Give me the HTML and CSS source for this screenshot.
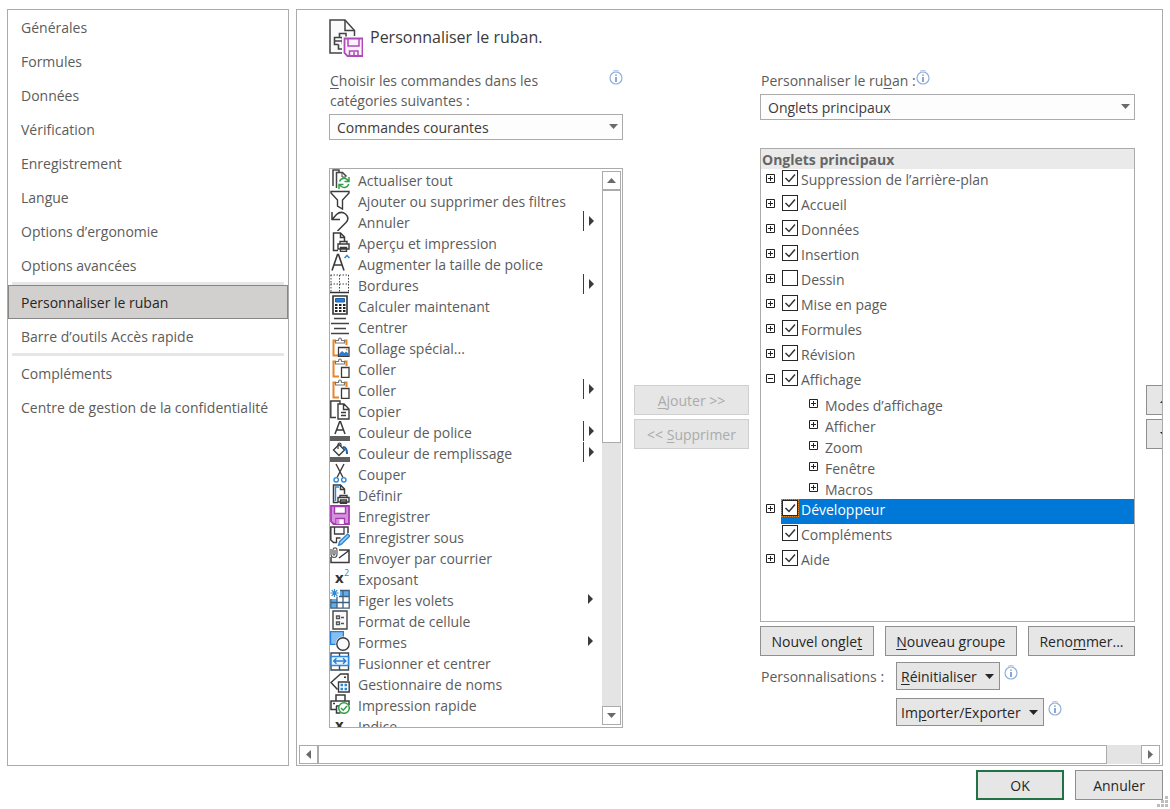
FILE: index.html
```html
<!DOCTYPE html>
<html lang="fr">
<head>
<meta charset="utf-8">
<meta name="viewport" content="width=device-width, initial-scale=1">
<title>Options</title>
<link rel="stylesheet" href="styles.css">
</head>
<body>
<svg class="defs" aria-hidden="true">
  <symbol id="info" viewBox="0 0 14 15"><circle cx="7" cy="8" r="6" fill="#fff" stroke="#8faedb" stroke-width="1.2"/><path d="M4 1.2Q7-.3 10 1.2" stroke="#a9c0e4" fill="none"/><path d="M7 7v5M7 4.500v1.200" stroke="#3f6cb0" stroke-width="1.200"/></symbol>
  <symbol id="down" viewBox="0 0 9 5"><path d="M0 0h9L4.500 5z"/></symbol>
  <symbol id="paste" viewBox="0 0 20 20"><path d="M6 3.500H3.500v15H9M14 3.500h2.500V8" fill="none" stroke="#e8842a" stroke-width="2"/><path d="M5.500 6V3.500h3Q8.500 1 10 1t1.500 2.500h3V6z" fill="#fff" stroke="#777" stroke-width="1.200"/><path d="M11.500 9.500h7.500v10h-7.500z" fill="#fff" stroke="#3b3b3b" stroke-width="1.300"/></symbol>
  <symbol id="plus" viewBox="0 0 9 9"><path d="M.5.5h8v8h-8zM2 4.500h5M4.500 2v5" fill="#fff" stroke="#222"/></symbol>
  <symbol id="minus" viewBox="0 0 9 9"><path d="M.5.5h8v8h-8zM2 4.500h5" fill="#fff" stroke="#222"/></symbol>
</svg>
<div class="dialog">
  <div class="workspace">
    <nav class="sidebar" aria-label="Catégories">
      <a href="#generales">Générales</a>
      <a href="#formules">Formules</a>
      <a href="#donnees">Données</a>
      <a href="#verification">Vérification</a>
      <a href="#enregistrement">Enregistrement</a>
      <a href="#langue">Langue</a>
      <a href="#ergonomie">Options d’ergonomie</a>
      <a href="#avancees">Options avancées</a>
      <hr>
      <a href="#ruban" class="current" aria-current="page">Personnaliser le ruban</a>
      <a href="#acces-rapide">Barre d’outils Accès rapide</a>
      <hr>
      <a href="#complements">Compléments</a>
      <a href="#confidentialite">Centre de gestion de la confidentialité</a>
    </nav>

    <main class="panel">
      <header class="heading">
        <svg width="34" height="38" viewBox="0 0 34 38" fill="none" stroke="#444" stroke-width="1.500"><path d="M13 34H1V1h15l9.500 10.500V17" fill="#fafafa"/><path d="M16 1v10.500h9.500"/><path d="M10.500 19v-4.500H17v4M9.500 18.500h-4v7h4M6 22h7M9.500 18.500h4v7M9.500 25.500V30H14" stroke-width="1.600"/><path d="M14.500 19h19v18.500H18l-3.500-3z" fill="#fff" stroke="#fff" stroke-width="3"/><path d="M15.500 19.500h18v17.500H18.500l-3-3z" fill="#fbf1fb" stroke="#ae4bb8" stroke-width="1.800"/><path d="M19 20v7h11v-7M20.500 37v-5h8.500v5M25 33v4" stroke="#ae4bb8"/></svg>
        <h1>Personnaliser le ruban.</h1>
      </header>

      <div class="columns">
        <section class="commands">
          <div class="field-label"><label for="source"><u>C</u>hoisir les commandes dans les catégories suivantes :</label><svg class="info"><use href="#info"/></svg></div>
          <div class="select"><select id="source"><option>Commandes courantes</option></select><svg><use href="#down"/></svg></div>
          <div class="listbox">
            <ul role="listbox" aria-label="Commandes courantes">
              <li role="option"><svg viewBox="0 0 20 20"><path d="M3 17V1h6v2M6.500 19V3.500h6l4 4" fill="none" stroke="#444" stroke-width="1.500"/><path d="M12 3.500V8h4" fill="none" stroke="#444"/><path d="M9.500 12.500q1.500-3.500 5-3.200 2.500.2 4 2.700M19 8v4.500h-4.500M18.800 15q-1.500 3.800-5 3.500-2.500-.2-4-2.700M9 20v-4.500h4.500" fill="none" stroke="#31a04b" stroke-width="1.500"/></svg>Actualiser tout</li>
              <li role="option"><svg viewBox="0 0 20 20"><path d="M1 1.500h18v1.500l-6.500 7V19l-5-3v-6L1 3z" fill="#fff" stroke="#3b3b3b" stroke-width="1.400"/></svg>Ajouter ou supprimer des filtres</li>
              <li role="option"><svg viewBox="0 0 20 20"><path d="M2 1v7.500h8M2.500 8l4-4.500Q11-.5 15.500 3q4.500 4 .5 8.500L7.500 20" fill="none" stroke="#3b3b3b" stroke-width="1.500"/></svg>Annuler<i class="more split"></i></li>
              <li role="option"><svg viewBox="0 0 20 20"><path d="M8 18.500H3.500V1h7l4 4v4M10.500 1v4.500h4" fill="#fff" stroke="#3b3b3b" stroke-width="1.500"/><path d="M10 12V9.500h7V12M8 12h11v5H8zM10.500 15.500h6v4h-6z" fill="#fff" stroke="#3b3b3b" stroke-width="1.400"/></svg>Aperçu et impression</li>
              <li role="option"><svg viewBox="0 0 20 20"><path d="M2 17.500L7.500 1.500h1L14 17.500M4 12h8" fill="none" stroke="#3b3b3b" stroke-width="1.600"/><path d="M14.500 5L17 2.500 19.500 5" fill="none" stroke="#2b88d8" stroke-width="1.500"/></svg>Augmenter la taille de police</li>
              <li role="option"><svg viewBox="0 0 20 20"><path d="M.5 1h18.500M.5 10h18.500M1 1v17M9.500 1v17M18.500 1v17" fill="none" stroke="#444" stroke-dasharray="1.500 1.500"/><path d="M0 18.500h19" stroke="#333" stroke-width="1.500"/></svg>Bordures<i class="more split"></i></li>
              <li role="option"><svg viewBox="0 0 20 20"><path d="M3 1h14v18H3z" fill="#fff" stroke="#333" stroke-width="1.600"/><path d="M5.500 3.500h9V7h-9z" fill="#2b7cd3" stroke="#1b5ea6"/><path d="M5 10h2.500M9 10h2.500M13 10h2.500M5 13h2.500M9 13h2.500M13 13h2.500M5 16h2.500M9 16h2.500M13 16h2.500" stroke="#222" stroke-width="2"/></svg>Calculer maintenant</li>
              <li role="option"><svg viewBox="0 0 20 20"><path d="M4 2.500h12M1 7.500h18M4 12.500h12M1 17.500h18" stroke="#444" stroke-width="1.300"/></svg>Centrer</li>
              <li role="option"><svg viewBox="0 0 20 20"><path d="M6 3.500H3.500v15H8M14 3.500h2.500V8" fill="none" stroke="#e8842a" stroke-width="2"/><path d="M5.500 6V3.500h3Q8.500 1 10 1t1.500 2.500h3V6z" fill="#fff" stroke="#777" stroke-width="1.200"/><path d="M8.500 10.500h10.500v9H8.500z" fill="#fff" stroke="#3b3b3b" stroke-width="1.300"/><path d="M9 17l3-3 2.500 2 1.500-1.500 2.500 2V19H9z" fill="#2b7cd3"/><path d="M16 12.500h1.500" stroke="#e8842a" stroke-width="1.500"/></svg>Collage spécial...</li>
              <li role="option"><svg><use href="#paste"/></svg>Coller</li>
              <li role="option"><svg><use href="#paste"/></svg>Coller<i class="more split"></i></li>
              <li role="option"><svg viewBox="0 0 20 20"><path d="M6 17.500H.8V1H10v3" fill="#fff" stroke="#3b3b3b" stroke-width="1.400"/><path d="M8 4h6l5 5v10H8zM13.500 4v5.500H19M11 12.500h5M11 15.500h5" fill="#fff" stroke="#3b3b3b" stroke-width="1.400"/></svg>Copier</li>
              <li role="option"><svg viewBox="0 0 20 20"><path d="M5 13L9.600.8h.9L15 13M6.500 9h7" fill="none" stroke="#3b3b3b" stroke-width="1.500"/><path d="M0 15h20v5H0z" fill="#606060"/></svg>Couleur de police<i class="more split"></i></li>
              <li role="option"><svg viewBox="0 0 20 20"><path d="M3.500 8L9 2.500l5.500 5.500L9 13.500z" fill="#fff" stroke="#3b3b3b" stroke-width="1.400"/><path d="M8 7V2.500Q8 1 9.500 1T11 2.500V4" fill="none" stroke="#3b3b3b" stroke-width="1.200"/><path d="M13 5q4 0 4 7" fill="none" stroke="#1b66b3" stroke-width="2"/><path d="M0 15h20v5H0z" fill="#606060"/></svg>Couleur de remplissage<i class="more split"></i></li>
              <li role="option"><svg viewBox="0 0 20 20"><path d="M6 1l7 13.500M14 1L7 14.500" stroke="#3b3b3b" stroke-width="1.400"/><g fill="#fff" stroke="#2b88d8" stroke-width="1.400"><circle cx="6.200" cy="16.800" r="2.200"/><circle cx="13.800" cy="16.800" r="2.200"/></g></svg>Couper</li>
              <li role="option"><svg viewBox="0 0 20 20"><path d="M8 18.500H3.500V1h7l4 4v5M10.500 1v4.500h4" fill="#fff" stroke="#3b3b3b" stroke-width="1.500"/><path d="M9 3H5.500v14" fill="none" stroke="#2b88d8" stroke-width="1.400"/><path d="M10 14v-2.500h7V14M8 13.500h11v4.500H8zM10.500 16h6v3.500h-6z" fill="#fff" stroke="#3b3b3b" stroke-width="1.400"/></svg>Définir</li>
              <li role="option"><svg viewBox="0 0 20 20"><path d="M1 1h18v18H3.500L1 16.500z" fill="#d592de" stroke="#a63bb0" stroke-width="1.800"/><path d="M4.500 1.500h11v7h-11zM6 19v-5.500h8.500V19" fill="#fff" stroke="#a63bb0" stroke-width="1.400"/><path d="M6.500 14h3v5h-3z" fill="#d592de"/></svg>Enregistrer</li>
              <li role="option"><svg viewBox="0 0 20 20"><path d="M7 16.500H3.500L.8 14V1H18v6" fill="#fff" stroke="#3b3b3b" stroke-width="1.500"/><path d="M4.500 1v7h9.500V1M6.500 17v-5h4" fill="none" stroke="#3b3b3b" stroke-width="1.300"/><path d="M8.500 19.500l1.200-4 8-7.500 2 2-8 8z" fill="#9ccdf3" stroke="#2b88d8" stroke-width="1.400"/></svg>Enregistrer sous</li>
              <li role="option"><svg viewBox="0 0 20 20"><path d="M9 3h10v12.500H1V10M9 11l10-7.500" fill="none" stroke="#3b3b3b" stroke-width="1.500"/><path d="M1 2v5.500q.2 3 3 3T7 7.500V2.500Q6.800.8 5 .8T3 2.500V7q.2 1.200 1 1.200T5 7V3" fill="none" stroke="#555" stroke-width="1.200"/></svg>Envoyer par courrier</li>
              <li role="option"><svg viewBox="0 0 20 20"><text x="5" y="15" class="glyph">x</text><text x="14" y="8" class="glyph-sup">2</text></svg>Exposant</li>
              <li role="option"><svg viewBox="0 0 20 20"><path d="M10 1.500h9V7H10zM1 10h6v9H1z" fill="#61aeea"/><path d="M10 1.500h9.200v17.700H.8V10M1 13.500h18M7 7.500V19M13 1.500V19M9 7.500h10" fill="none" stroke="#3f5f80" stroke-width="1.300"/><path d="M4.500 0v8M.5 4h8M1.700 1.200l5.600 5.600M7.300 1.200L1.700 6.800" stroke="#2b88d8" stroke-width="1.200"/></svg>Figer les volets<i class="more"></i></li>
              <li role="option"><svg viewBox="0 0 20 20"><path d="M3 1h14v18H3z" fill="#fafafa" stroke="#444" stroke-width="1.400"/><path d="M6.500 6h3v2.500h-3zM6.500 12h3v2.500h-3zM11 7.500h3M11 13.500h3" fill="none" stroke="#555" stroke-width="1.300"/></svg>Format de cellule</li>
              <li role="option"><svg viewBox="0 0 20 20"><path d="M.6.6h12.800v12.800H.6z" fill="#83c0f3" stroke="#2b7cd3" stroke-width="1.200"/><circle cx="13" cy="13" r="7.500" fill="#fff"/><circle cx="13" cy="13" r="6.200" fill="#fafafa" stroke="#3b3b3b" stroke-width="1.400"/></svg>Formes<i class="more"></i></li>
              <li role="option"><svg viewBox="0 0 20 20"><path d="M1 1h17.500v17H1zM9.500 1v17" fill="#fff" stroke="#3b4a5a" stroke-width="1.400"/><path d="M1 4.500h17.500v9H1z" fill="#e8f4fd" stroke="#2b88d8" stroke-width="1.500"/><path d="M4 9h11.500M6.500 6.200L3.700 9l2.800 2.800M13 6.200L15.800 9 13 11.800" fill="none" stroke="#2b7cd3" stroke-width="1.400"/></svg>Fusionner et centrer</li>
              <li role="option"><svg viewBox="0 0 20 20"><path d="M7.500 16.500L1 9.500 10.500 1H18v7" fill="none" stroke="#3b3b3b" stroke-width="1.500"/><path d="M14 3.500h2V5h-2z" fill="#333"/><path d="M8.500 9h10.700v10H8.500z" fill="#fff" stroke="#3b3b3b" stroke-width="1.400"/><path d="M10.500 12h2.500M14.500 12H17M10.500 16h2.500M14.500 16H17" stroke="#2b88d8" stroke-width="2.400"/></svg>Gestionnaire de noms</li>
              <li role="option"><svg viewBox="0 0 20 20"><path d="M6 7V1h9v6M6 15.500H1V7h18v4M6.500 12v7h4M6 12h5M3 9.500h2" fill="none" stroke="#3b3b3b" stroke-width="1.500"/><circle cx="14" cy="14" r="5.300" fill="#fff" stroke="#31a04b" stroke-width="1.500"/><path d="M11 14l2.200 2.200L17 12" fill="none" stroke="#31a04b" stroke-width="1.500"/></svg>Impression rapide</li>
              <li role="option"><svg viewBox="0 0 20 20"><text x="5" y="15" class="glyph">x</text></svg>Indice</li>
            </ul>
            <div class="vscroll" aria-hidden="true">
              <span class="cap"><svg class="up"><use href="#down"/></svg></span>
              <span class="thumb"></span>
              <span class="track"></span>
              <span class="cap"><svg><use href="#down"/></svg></span>
            </div>
          </div>
        </section>

        <div class="transfer">
          <button type="button" disabled><u>A</u>jouter &gt;&gt;</button>
          <button type="button" disabled>&lt;&lt; <u>S</u>upprimer</button>
        </div>

        <section class="ribbon">
          <div class="field-label short"><label for="target">Personnaliser le ru<u>b</u>an :</label><svg class="info"><use href="#info"/></svg></div>
          <div class="select"><select id="target"><option>Onglets principaux</option></select><svg><use href="#down"/></svg></div>
          <div class="tree">
            <h2>Onglets principaux</h2>
            <ul>
              <li><div class="node"><button type="button" aria-label="Développer"><svg><use href="#plus"/></svg></button><label><input type="checkbox" checked>Suppression de l’arrière-plan</label></div></li>
              <li><div class="node"><button type="button" aria-label="Développer"><svg><use href="#plus"/></svg></button><label><input type="checkbox" checked>Accueil</label></div></li>
              <li><div class="node"><button type="button" aria-label="Développer"><svg><use href="#plus"/></svg></button><label><input type="checkbox" checked>Données</label></div></li>
              <li><div class="node"><button type="button" aria-label="Développer"><svg><use href="#plus"/></svg></button><label><input type="checkbox" checked>Insertion</label></div></li>
              <li><div class="node"><button type="button" aria-label="Développer"><svg><use href="#plus"/></svg></button><label><input type="checkbox">Dessin</label></div></li>
              <li><div class="node"><button type="button" aria-label="Développer"><svg><use href="#plus"/></svg></button><label><input type="checkbox" checked>Mise en page</label></div></li>
              <li><div class="node"><button type="button" aria-label="Développer"><svg><use href="#plus"/></svg></button><label><input type="checkbox" checked>Formules</label></div></li>
              <li><div class="node"><button type="button" aria-label="Développer"><svg><use href="#plus"/></svg></button><label><input type="checkbox" checked>Révision</label></div></li>
              <li><div class="node"><button type="button" aria-label="Réduire"><svg><use href="#minus"/></svg></button><label><input type="checkbox" checked>Affichage</label></div>
                <ul class="groups">
                  <li><button type="button" aria-label="Développer"><svg><use href="#plus"/></svg></button>Modes d’affichage</li>
                  <li><button type="button" aria-label="Développer"><svg><use href="#plus"/></svg></button>Afficher</li>
                  <li><button type="button" aria-label="Développer"><svg><use href="#plus"/></svg></button>Zoom</li>
                  <li><button type="button" aria-label="Développer"><svg><use href="#plus"/></svg></button>Fenêtre</li>
                  <li><button type="button" aria-label="Développer"><svg><use href="#plus"/></svg></button>Macros</li>
                </ul>
              </li>
              <li><div class="node selected"><button type="button" aria-label="Développer"><svg><use href="#plus"/></svg></button><label><input type="checkbox" checked>Développeur</label></div></li>
              <li><div class="node"><span></span><label><input type="checkbox" checked>Compléments</label></div></li>
              <li><div class="node"><button type="button" aria-label="Développer"><svg><use href="#plus"/></svg></button><label><input type="checkbox" checked>Aide</label></div></li>
            </ul>
          </div>
          <div class="tab-actions">
            <button type="button">Nouvel ongle<u>t</u></button>
            <button type="button"><u>N</u>ouveau groupe</button>
            <button type="button">Reno<u>m</u>mer...</button>
          </div>
          <div class="custom">
            <span>Personnalisations :</span>
            <div class="menu"><button type="button"><span><u>R</u>éinitialiser</span><svg><use href="#down"/></svg></button><svg class="info"><use href="#info"/></svg></div>
            <div class="menu"><button type="button"><span>Im<u>p</u>orter/Exporter</span><svg><use href="#down"/></svg></button><svg class="info"><use href="#info"/></svg></div>
          </div>
        </section>

        <div class="order">
          <button type="button" aria-label="Monter"><svg class="up"><use href="#down"/></svg></button>
          <button type="button" aria-label="Descendre"><svg><use href="#down"/></svg></button>
        </div>
      </div>

      <div class="hscroll" aria-hidden="true">
        <span class="cap"><svg class="left"><use href="#down"/></svg></span>
        <span class="thumb"></span>
        <span class="track"></span>
        <span class="cap"><svg class="right"><use href="#down"/></svg></span>
      </div>
    </main>
  </div>

  <footer class="footer">
    <button type="button" class="primary">OK</button>
    <button type="button">Annuler</button>
  </footer>
  <svg class="grip" viewBox="0 0 12 12" aria-hidden="true"><path d="M8 0h3v3H8zM4 4h3v3H4zM8 4h3v3H8zM0 8h3v3H0zM4 8h3v3H4zM8 8h3v3H8z" fill="#bdbdbd"/></svg>
</div>
</body>
</html>
```

FILE: styles.css
```css
* { box-sizing: border-box; }
body {
  margin: 0;
  background: #fff;
  color: #5c5c5c;
  font: 14px/20px "Open Sans", "Noto Sans", sans-serif;
}
ul { list-style: none; margin: 0; padding: 0; }
svg { display: block; flex: none; }
u { text-underline-offset: 2px; }
.defs { position: absolute; width: 0; height: 0; }

.dialog {
  position: relative;
  min-height: 100vh;
  padding: 9px 7px;
  display: flex;
  flex-direction: column;
  gap: 4px;
}
.workspace { flex: 1; display: flex; gap: 7px; }

/* Category list */
.sidebar { flex: none; width: 282px; border: 1px solid #ababab; }
.sidebar a {
  display: block;
  padding: 8px 13px 6px;
  color: inherit;
  text-decoration: none;
  white-space: nowrap;
}
.sidebar a.current {
  padding: 7px 12px 5px;
  border: 1px solid #868686;
  background: #d2d0ce;
  color: #262626;
}
.sidebar hr { height: 3px; margin: 0 4px; border: 0; background: #e6e6e6; }

/* Main panel */
.panel {
  flex: 1;
  min-width: 0;
  display: flex;
  flex-direction: column;
  overflow: hidden;
  border: 1px solid #ababab;
}
.heading { display: flex; gap: 7px; padding: 9px 0 0 32px; }
h1 { margin: 0; font-size: 16px; font-weight: 400; line-height: 36px; color: #3b3b3b; }
.columns {
  flex: 1;
  display: grid;
  grid-template-columns: minmax(0, 294fr) 115px minmax(0, 375fr) 16px;
  gap: 11px;
  padding: 14px 0 17px 32px;
}
.commands, .ribbon { display: flex; flex-direction: column; }
.field-label {
  display: flex;
  justify-content: space-between;
  height: 43px;
  padding-left: 1px;
}
.field-label label { width: 230px; }
.field-label.short { height: 23px; justify-content: flex-start; }
.field-label.short label { width: auto; }
.info { width: 14px; height: 15px; margin-top: -1px; }

.select { position: relative; margin-bottom: 28px; }
.select select {
  display: block;
  width: 100%;
  height: 26px;
  padding: 2px 24px 0 7px;
  border: 1px solid #ababab;
  border-radius: 0;
  background: #fdfdfd;
  color: #3b3b3b;
  font: inherit;
  appearance: none;
}
.select svg {
  position: absolute;
  right: 5px;
  top: 10px;
  width: 9px;
  height: 5px;
  fill: #6a6a6a;
  pointer-events: none;
}

.listbox {
  flex: 1 1 0;
  min-height: 200px;
  display: flex;
  overflow: hidden;
  border: 1px solid #ababab;
}
.listbox ul { flex: 1; height: 558px; overflow: hidden; }
.listbox li {
  display: flex;
  height: 21px;
  line-height: 24px;
  white-space: nowrap;
}
.listbox li svg { width: 20px; height: 20px; margin-right: 8px; }
.glyph { font: bold 15px "Open Sans", sans-serif; fill: #333; }
.glyph-sup { font: 9px "Open Sans", sans-serif; fill: #2b88d8; }
.more {
  display: flex;
  align-items: center;
  width: 18px;
  height: 20px;
  margin-left: auto;
  padding-left: 5px;
}
.more::before {
  content: "";
  border: 5px solid transparent;
  border-left-color: #3b3b3b;
  border-right: 0;
}
.more.split { border-left: 1px solid #3b3b3b; }

.vscroll { width: 21px; padding: 2px 1px; display: flex; flex-direction: column; }
.cap {
  display: grid;
  place-items: center;
  width: 19px;
  height: 19px;
  border: 1px solid #ababab;
  background: #fff;
}
.cap svg { width: 9px; height: 5px; fill: #6a6a6a; }
.thumb { border: 1px solid #ababab; background: #fff; }
.track { background: #e4e4e4; }
.vscroll .thumb { flex: 252; }
.vscroll .track { flex: 264; }
.up { transform: rotate(180deg); }
.left { transform: rotate(90deg); }
.right { transform: rotate(-90deg); }

/* Buttons */
.transfer button, .order button, .tab-actions button, .menu button, .footer button {
  height: 30px;
  padding: 2px 10px 0;
  border: 1px solid #8f8f8f;
  background: #e6e6e6;
  color: #262626;
  font: inherit;
  white-space: nowrap;
}
.transfer, .order { display: flex; flex-direction: column; gap: 4px; padding-top: 314px; }
.transfer button:disabled { border-color: #cfcfcf; color: #ababab; }
.order button { width: 38px; padding: 0 13px; }
.order svg { width: 9px; height: 5px; fill: #262626; }

/* Ribbon tree */
.tree { flex: 1; min-height: 200px; border: 1px solid #ababab; overflow: hidden; }
.tree h2 { margin: 0; padding: 2px 0 0 1px; background: #eaeaea; font-size: 14px; font-weight: 700; line-height: 18px; color: #666; }
.tree button { width: 9px; height: 9px; padding: 0; border: 0; background: none; }
.tree button svg { width: 9px; height: 9px; }
.node { display: grid; grid-template-columns: 15px 1fr; height: 25px; padding-left: 5px; }
.node button { margin-top: 5px; }
.node label { display: flex; gap: 3px; padding: 1px 0 0 1px; }
.node.selected label { background: #0078d7; color: #fff; outline-offset: 0; }
.node input {
  flex: none;
  width: 16px;
  height: 16px;
  margin: 0;
  border: 1px solid #262626;
  background: #fff;
  appearance: none;
}
.node input:checked {
  background-image: url("data:image/svg+xml,%3Csvg xmlns='http://www.w3.org/2000/svg' viewBox='0 0 14 14'%3E%3Cpath d='M2.500 7l3.500 3.500 6-7' fill='none' stroke='%23333' stroke-width='1.500'/%3E%3C/svg%3E");
}
.node.selected input { outline: 1px dotted #e8842a; }
.groups li { display: flex; gap: 7px; height: 21px; padding: 0 0 0 48px; line-height: 24px; }
.groups button { margin-top: 5px; }

.tab-actions { display: flex; gap: 11px; margin-top: 4px; }
.tab-actions button { flex: 1 1 auto; }
.custom {
  display: grid;
  grid-template-columns: 135px 1fr;
  gap: 8px 0;
  margin-top: 6px;
  padding-left: 1px;
  padding-bottom: 2px;
}
.custom > span { padding-top: 1px; line-height: 28px; height: 28px; }
.menu { grid-column: 2; display: flex; gap: 4px; }
.menu .info { margin-top: 3px; }
.menu button { display: flex; align-items: center; gap: 8px; height: 28px; padding: 0 5px 0 4px; }
.menu button span { padding-top: 2px; }
.menu button svg { width: 9px; height: 5px; fill: #262626; }

.hscroll { display: flex; margin: 0 2px 1px; }
.hscroll .thumb { flex: 789; }
.hscroll .track { flex: 34; }

.footer { display: flex; justify-content: flex-end; gap: 11px; }
.footer button { width: 88px; }
.footer .primary { border: 2px solid #217346; }
.grip { position: absolute; right: 1px; bottom: 1px; width: 12px; height: 12px; }
```
